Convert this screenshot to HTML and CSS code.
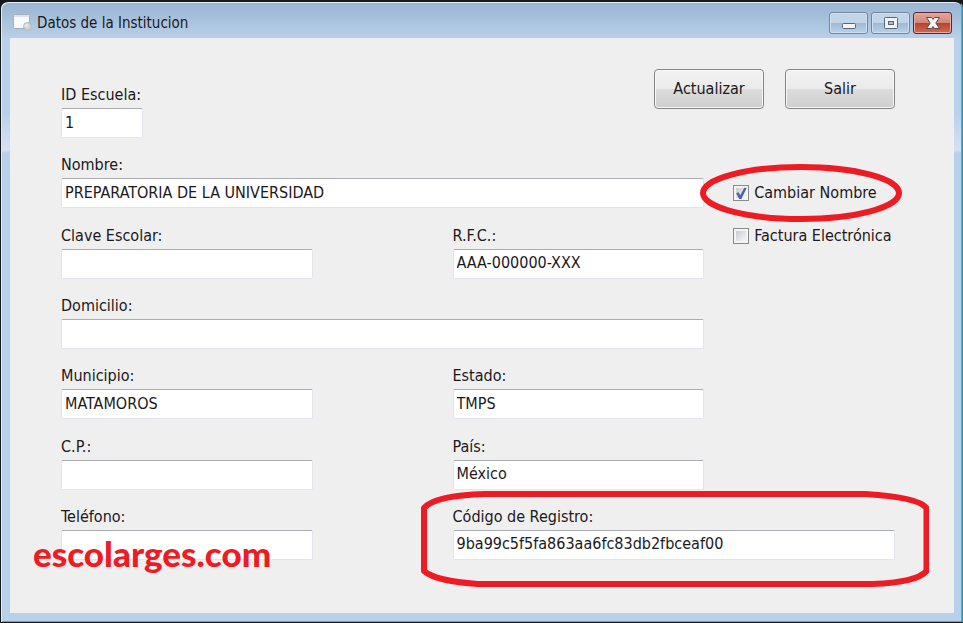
FILE: index.html
```html
<!doctype html>
<html lang="es">
  <head>
    <meta charset="UTF-8" />
    <meta name="viewport" content="width=device-width, initial-scale=1.0" />
    <title>Datos de la Institucion</title>
    <link rel="stylesheet" href="styles.css">
  </head>
  <body>
    <div class="window">
      <header class="titlebar">
        <svg class="app-icon" width="20" height="18" viewBox="0 0 20 18">
          <rect x="0.5" y="0.5" width="16" height="14" rx="1" fill="#fafafa" stroke="#a3aebb" />
          <path d="M1 2h15" stroke="#dfe3e8" stroke-width="2" />
          <circle cx="14.5" cy="12.5" r="4" fill="#cfd2d4" stroke="#b4b8bc" />
          <circle cx="13.5" cy="11.5" r="2" fill="#e4e6e7" />
        </svg>
        <h1 class="title">Datos de la Institucion</h1>
        <div class="controls">
          <button type="button" class="control" aria-label="Minimizar">
            <svg width="16" height="16" viewBox="0 0 16 16">
              <rect x="1.5" y="8.5" width="13" height="5" rx="1" fill="#f3f3f3" stroke="#5c6577" />
            </svg>
          </button>
          <button type="button" class="control" aria-label="Maximizar">
            <svg width="16" height="16" viewBox="0 0 16 16">
              <rect x="1.5" y="2.5" width="13" height="11" rx="1" fill="#f3f3f3" stroke="#5c6577" />
              <rect x="5.5" y="6.5" width="5" height="3" fill="#a9bdd6" stroke="#5c6577" />
            </svg>
          </button>
          <button type="button" class="control control-close" aria-label="Cerrar">
            <svg width="16" height="16" viewBox="0 0 16 16">
              <path
                d="M1.500 2.500h5l1.500 2 1.500-2h5L10.800 8l3.700 5.500h-5l-1.500-2-1.500 2h-5L5.200 8z"
                fill="#f6f4f4"
                stroke="#5e4a56"
                stroke-linejoin="round"
              />
            </svg>
          </button>
        </div>
      </header>

      <main class="client">
        <form class="form">
          <div class="field field-id">
            <label for="id-escuela">ID Escuela:</label>
            <input type="text" id="id-escuela" value="1" />
          </div>
          <div class="actions">
            <button type="button" class="button">Actualizar</button>
            <button type="button" class="button">Salir</button>
          </div>

          <div class="field field-wide">
            <label for="nombre">Nombre:</label>
            <input type="text" id="nombre" value="PREPARATORIA DE LA UNIVERSIDAD" />
          </div>
          <div class="check check-nombre">
            <input type="checkbox" id="cambiar-nombre" checked />
            <label for="cambiar-nombre">Cambiar Nombre</label>
            <svg class="mark mark-oval" viewBox="0 0 202 58" preserveAspectRatio="none">
              <ellipse cx="101" cy="29" rx="98" ry="26" />
            </svg>
          </div>

          <div class="field field-left">
            <label for="clave">Clave Escolar:</label>
            <input type="text" id="clave" />
          </div>
          <div class="field field-right">
            <label for="rfc">R.F.C.:</label>
            <input type="text" id="rfc" value="AAA-000000-XXX" />
          </div>
          <div class="check check-factura">
            <input type="checkbox" id="factura" />
            <label for="factura">Factura Electrónica</label>
          </div>

          <div class="field field-wide">
            <label for="domicilio">Domicilio:</label>
            <input type="text" id="domicilio" />
          </div>

          <div class="field field-left">
            <label for="municipio">Municipio:</label>
            <input type="text" id="municipio" value="MATAMOROS" />
          </div>
          <div class="field field-right">
            <label for="estado">Estado:</label>
            <input type="text" id="estado" value="TMPS" />
          </div>

          <div class="field field-left">
            <label for="cp">C.P.:</label>
            <input type="text" id="cp" />
          </div>
          <div class="field field-right">
            <label for="pais">País:</label>
            <input type="text" id="pais" value="México" />
          </div>

          <div class="field field-left">
            <label for="telefono">Teléfono:</label>
            <input type="text" id="telefono" />
            <span class="watermark">escolarges.com</span>
          </div>
          <div class="field field-codigo">
            <label for="codigo">Código de Registro:</label>
            <input type="text" id="codigo" value="9ba99c5f5fa863aa6fc83db2fbceaf00" />
            <svg class="mark mark-box" viewBox="0 0 509 96" preserveAspectRatio="none">
              <path
                d="M3 17C10 9 32 4 64 3H445C478 5 500 9 506 17V80C500 87 482 92 452 93H57C32 91 12 88 3 80Z"
              />
            </svg>
          </div>
        </form>
      </main>
    </div>
  </body>
</html>
```

FILE: styles.css
```css
* {
  margin: 0;
  padding: 0;
  box-sizing: border-box;
}

html,
body {
  height: 100%;
}

body {
  background-color: #16191c;
  color: #1c1820;
  font-family: "DejaVu Sans Condensed", "DejaVu Sans", Tahoma, sans-serif;
  font-size: 16px;
  line-height: 20px;
}

input,
button {
  font: inherit;
  color: inherit;
}

/* Window frame */
.window {
  display: flex;
  flex-direction: column;
  min-height: 100%;
  padding: 0 7px 7px;
  border: 1px solid #16191c;
  border-top-width: 2px;
  border-right-color: #2b98ad;
  border-radius: 8px 8px 0 0;
  background: linear-gradient(#99b4d1, #b9d1ea 38px, #b9d1ea 110px, #d4e2f2 148px, #b9d0eb 151px);
  box-shadow:
    inset 1px 1px 0 #e3ecf5,
    inset -1px -1px 0 #35b9cf;
}

.titlebar {
  display: flex;
  align-items: center;
  height: 36px;
  padding: 0 3px 0 5px;
}

.app-icon {
  margin-top: 6px;
}

.title {
  flex: 1;
  margin: 6px 0 0 4px;
  font-size: 15px;
  font-weight: 400;
}

.controls {
  display: flex;
  gap: 3px;
}

.control {
  display: flex;
  align-items: center;
  justify-content: center;
  width: 39px;
  height: 22px;
  margin-top: 6px;
  border: 1px solid #71869f;
  border-radius: 3px;
  background: linear-gradient(#c1d4e8 50%, #9fb9d5 50%, #b9d1e8);
  box-shadow: inset 0 0 0 1px #d0e0f0;
}

.control-close {
  border-color: #5b2433;
  background: linear-gradient(#e3a59b, #d68577 50%, #b9402b 50%, #cf6e50);
  box-shadow: inset 0 0 0 1px #e6ada2;
}

.client {
  display: flex;
  flex: 1;
  margin: 0 1px 2px 2px;
  padding: 31px 59px 53px 51px;
  background-color: #efefef;
}

/* Form */
.form {
  display: grid;
  flex: 1;
  grid-template-columns: 252fr 140fr 252fr 191fr;
  align-content: space-between;
  row-gap: 12px;
}

.field {
  position: relative;
  display: flex;
  flex-direction: column;
  gap: 3px;
}

.field-id {
  grid-column: 1;
  width: 82px;
  padding-top: 16px;
}

.field-left {
  grid-column: 1;
}

.field-right {
  grid-column: 3;
}

.field-wide {
  grid-column: 1 / 4;
}

.field-codigo {
  grid-column: 3 / 5;
}

.field input {
  width: 100%;
  height: 30px;
  padding: 0 3px 2px;
  border: 1px solid #e2e6ec;
  border-top: 1px solid #abadb3;
  border-radius: 2px;
  background-color: #fff;
}

.actions {
  display: flex;
  grid-column: 3 / 5;
  gap: 21px;
  justify-content: flex-end;
}

.button {
  width: 110px;
  height: 40px;
  border: 1px solid #858585;
  border-radius: 4px;
  background: linear-gradient(#f2f2f2, #ebebeb 50%, #dcdcdc 50%, #cecece);
  box-shadow: inset 0 0 0 1px #f8f8f8;
}

.check {
  position: relative;
  display: flex;
  grid-column: 4;
  gap: 5px;
  align-items: center;
  margin-left: 29px;
  white-space: nowrap;
}

.check-nombre {
  align-self: end;
  height: 30px;
}

.check-factura {
  align-self: start;
}

.check input {
  flex: none;
  width: 16px;
  height: 16px;
  appearance: none;
  border: 1px solid #8a8b8d;
  background: linear-gradient(135deg, #c9cdd2, #f6f6f6) center / 10px 10px no-repeat #f4f4f4;
}

.check input:checked::before {
  content: "";
  display: block;
  width: 12px;
  height: 12px;
  margin: 1px;
  background-color: #4b62a5;
  clip-path: polygon(8% 50%, 28% 42%, 42% 66%, 76% 4%, 96% 4%, 50% 100%, 34% 100%);
}

/* Red annotations drawn over the form */
.mark {
  position: absolute;
  fill: none;
  stroke: #ed1c24;
  stroke-width: 6px;
  stroke-linejoin: round;
  pointer-events: none;
}

.mark-oval {
  top: -14px;
  left: -33px;
  width: 202px;
  height: 58px;
}

.mark-box {
  top: -16px;
  left: -32px;
  width: calc(100% + 66px);
  height: 96px;
}

.watermark {
  position: absolute;
  top: 26px;
  left: -28px;
  color: #ed1c24;
  font-family: Lato, sans-serif;
  font-size: 35px;
  font-weight: 900;
  line-height: 40px;
  pointer-events: none;
}
```
